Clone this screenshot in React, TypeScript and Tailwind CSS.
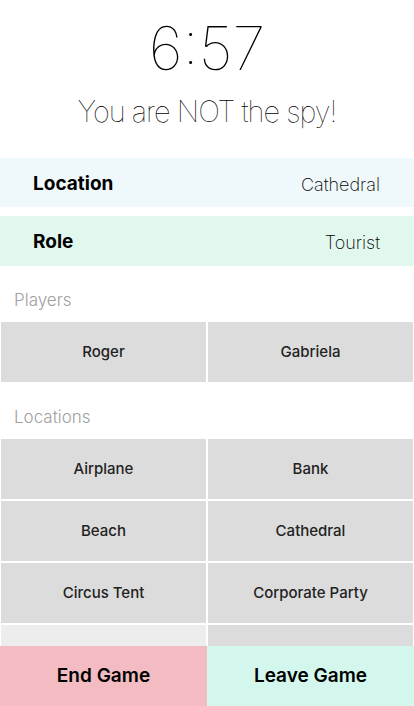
const players = ["Roger", "Gabriela"];

const locations = [
  "Airplane",
  "Bank",
  "Beach",
  "Cathedral",
  "Circus Tent",
  "Corporate Party",
];

function Cell({ name, dim }: { name?: string; dim?: boolean }) {
  return (
    <div
      className={`m-px flex h-[60px] items-center justify-center text-[15px] font-[550] text-[#222] ${
        dim ? "bg-[#ededed]" : "bg-[#dcdcdc]"
      }`}
    >
      {name}
    </div>
  );
}

export default function App() {
  return (
    <div className="flex h-[706px] w-full flex-col bg-white font-['Inter',sans-serif] text-black">
      <div className="flex-1 overflow-hidden">
        <div className="pt-[16px] text-center text-[60px] font-thin leading-[64px]">
          6:57
        </div>
        <div className="mt-[14px] text-center text-[29px] font-thin leading-[36px] tracking-[-1px]">
          You are NOT the spy!
        </div>

        <div className="mt-[28px] flex h-[49px] items-center justify-between bg-[#eff8fa] pl-[33px] pr-[34px] pt-[3px] text-[18px]">
          <span className="text-[19px] font-bold">Location</span>
          <span className="font-extralight">Cathedral</span>
        </div>
        <div className="mt-[9px] flex h-[50px] items-center justify-between bg-[#e2f8ee] pl-[33px] pr-[34px] pt-[3px] text-[18px]">
          <span className="text-[19px] font-bold">Role</span>
          <span className="font-extralight">Tourist</span>
        </div>

        <div className="mt-[22px] px-[14px] text-[17px] font-light leading-[24px] text-[#a0a0a0]">
          Players
        </div>
        <div className="mt-[9px] grid grid-cols-2">
          {players.map((p) => (
            <Cell key={p} name={p} />
          ))}
        </div>

        <div className="mt-[22px] px-[14px] text-[17px] font-light leading-[24px] text-[#a0a0a0]">
          Locations
        </div>
        <div className="mt-[9px] grid grid-cols-2">
          {locations.map((l) => (
            <Cell key={l} name={l} />
          ))}
          {/* next row sits under the buttons, its labels below the fold */}
          <Cell dim />
          <Cell />
        </div>
      </div>

      <div className="grid h-[60px] shrink-0 grid-cols-2 text-[19px] font-semibold">
        <button className="bg-[#f2bcc2]">End Game</button>
        <button className="bg-[#d3f7ec]">Leave Game</button>
      </div>
    </div>
  );
}
